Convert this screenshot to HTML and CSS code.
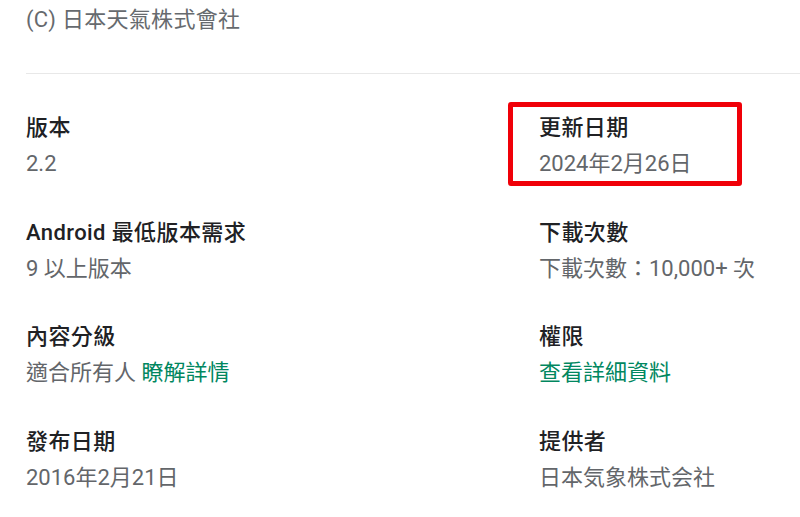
FILE: index.html
```html
<!DOCTYPE html>
<html lang="zh-Hant">
<head>
<meta charset="utf-8">
<title>應用程式資訊</title>
<link rel="stylesheet" href="styles.css">
</head>
<body>
<div class="page">
  <div class="copyright">(C) 日本天氣株式會社</div>
  <div class="divider"></div>
  <div class="grid">
    <div class="item">
      <div class="label">版本</div>
      <div class="value">2.2</div>
    </div>
    <div class="item highlighted">
      <div class="label">更新日期</div>
      <div class="value">2024年2月26日</div>
      <div class="mark"></div>
    </div>
    <div class="item">
      <div class="label">Android 最低版本需求</div>
      <div class="value">9 以上版本</div>
    </div>
    <div class="item">
      <div class="label">下載次數</div>
      <div class="value">下載次數：10,000+ 次</div>
    </div>
    <div class="item">
      <div class="label">內容分級</div>
      <div class="value">適合所有人 <span class="link">瞭解詳情</span></div>
    </div>
    <div class="item">
      <div class="label">權限</div>
      <div class="value"><span class="link">查看詳細資料</span></div>
    </div>
    <div class="item">
      <div class="label">發布日期</div>
      <div class="value">2016年2月21日</div>
    </div>
    <div class="item">
      <div class="label">提供者</div>
      <div class="value">日本気象株式会社</div>
    </div>
  </div>
</div>
</body>
</html>
```
FILE: styles.css
```css
html, body {
  margin: 0;
  padding: 0;
  background: #ffffff;
}

body {
  font-family: Roboto, "Noto Sans CJK TC", sans-serif;
  overflow: hidden;
}

.page {
  padding-left: 26px;
}

.copyright {
  font-size: 22px;
  line-height: 40px;
  letter-spacing: 0.3px;
  color: #666a6e;
}

.divider {
  margin-top: 33px;
  height: 1px;
  background: #e8e8e8;
}

.grid {
  margin-top: 38px;
  display: grid;
  grid-template-columns: 513px 1fr;
  row-gap: 36.5px;
}

.item {
  position: relative;
}

.label {
  font-size: 22px;
  line-height: 32px;
  font-weight: 500;
  letter-spacing: 0.4px;
  color: #202124;
}

.value {
  margin-top: 4px;
  font-size: 22px;
  line-height: 32px;
  color: #63666a;
}

.link {
  color: #01875f;
}

.mark {
  position: absolute;
  left: -31px;
  top: -10px;
  width: 234px;
  height: 84px;
  box-sizing: border-box;
  border: 5px solid #f00008;
  border-radius: 3px;
}
```
